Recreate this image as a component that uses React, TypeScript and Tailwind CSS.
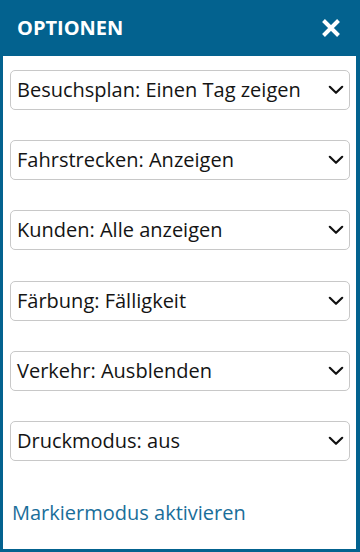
import React from "react";

const options = [
  "Besuchsplan: Einen Tag zeigen",
  "Fahrstrecken: Anzeigen",
  "Kunden: Alle anzeigen",
  "Färbung: Fälligkeit",
  "Verkehr: Ausblenden",
  "Druckmodus: aus",
];

function Chevron() {
  return (
    <svg width="16" height="10" viewBox="0 0 16 10" className="shrink-0">
      <path d="M1.8 1.8 L8 7.8 L14.2 1.8" fill="none" stroke="#111" strokeWidth="2.2" strokeLinecap="round" strokeLinejoin="round" />
    </svg>
  );
}

export default function App() {
  return (
    <div
      className="w-[360px] h-[552px] bg-[#03628f] flex flex-col pl-[3px] pr-[4px] pb-[3px]"
      style={{ fontFamily: '"Open Sans", "Noto Sans", sans-serif' }}
    >
      <div className="h-[56px] -ml-[3px] -mr-[4px] flex items-center justify-between pl-[17px] pr-[19px] shrink-0">
        <span className="text-white font-bold text-[20px] leading-none">OPTIONEN</span>
        <svg width="20" height="20" viewBox="0 0 20 20">
          <path d="M2.5 2.5 L17.5 17.5 M17.5 2.5 L2.5 17.5" stroke="#fff" strokeWidth="4" strokeLinecap="butt" />
        </svg>
      </div>
      <div className="flex-1 bg-white flex flex-col pl-[7px] pr-[6px] pt-[14px]">
        <div className="flex flex-col gap-[30.2px]">
          {options.map((o) => (
            <div
              key={o}
              className="h-[40px] border border-[#c8c8c8] rounded-[5px] flex items-center justify-between pl-[6px] pr-[5px] text-[20px] text-[#141414]"
            >
              <span className="leading-none">{o}</span>
              <Chevron />
            </div>
          ))}
        </div>
        <a className="mt-[42px] ml-[2px] text-[20px] text-[#1a6e9a] leading-none cursor-pointer">
          Markiermodus aktivieren
        </a>
      </div>
    </div>
  );
}
